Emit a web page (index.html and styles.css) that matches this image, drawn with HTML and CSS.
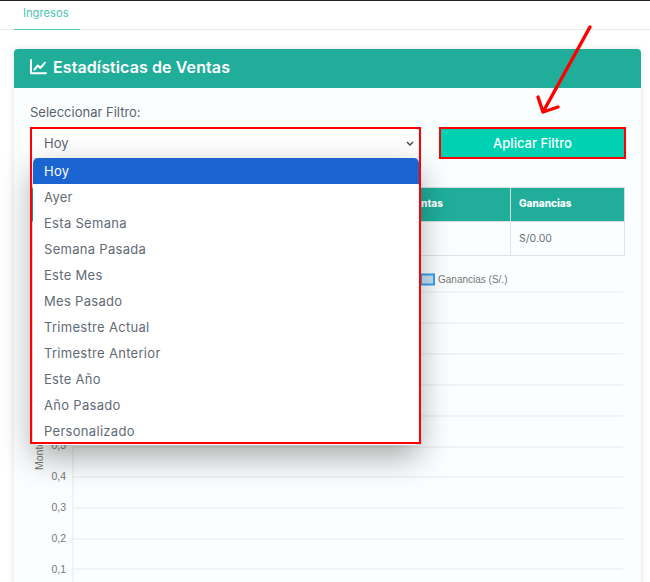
FILE: index.html
```html
<!DOCTYPE html>
<html lang="es">
<head>
<meta charset="utf-8">
<title>Estadísticas de Ventas</title>
<link rel="stylesheet" href="styles.css">
</head>
<body>
<div class="page">
  <nav class="tabs"><a class="tab">Ingresos</a></nav>
  <section class="card">
    <header class="card-head">
      <svg class="head-icon" viewBox="0 0 17 16" width="17" height="16"><path d="M1 1v13.2h15" fill="none" stroke="#fff" stroke-width="2" stroke-linecap="round" stroke-linejoin="round"/><path d="M4.5 10.5l3.3-4 2.7 2.4 4.5-5.2" fill="none" stroke="#fff" stroke-width="2" stroke-linecap="round" stroke-linejoin="round"/></svg>
      <h1>Estadísticas de Ventas</h1>
    </header>
    <div class="card-body">
      <div class="filters">
        <div class="field">
          <label class="field-label">Seleccionar Filtro:</label>
          <div class="select">
            <span>Hoy</span>
            <svg class="chev" viewBox="0 0 8 5" width="8" height="5"><path d="M1 1l3 3 3-3" fill="none" stroke="#444" stroke-width="1.4"/></svg>
          </div>
          <ul class="menu">
            <li class="on">Hoy</li>
            <li>Ayer</li>
            <li>Esta Semana</li>
            <li>Semana Pasada</li>
            <li>Este Mes</li>
            <li>Mes Pasado</li>
            <li>Trimestre Actual</li>
            <li>Trimestre Anterior</li>
            <li>Este Año</li>
            <li>Año Pasado</li>
            <li>Personalizado</li>
          </ul>
          <div class="red-box"></div>
        </div>
        <button class="apply">Aplicar Filtro</button>
      </div>
      <table class="stats">
        <thead><tr><th class="c1"></th><th class="c2">Ventas</th><th class="c3">Ganancias</th></tr></thead>
        <tbody><tr><td></td><td></td><td>S/0.00</td></tr></tbody>
      </table>
      <div class="chart">
        <svg viewBox="0 0 600 320" width="600" height="320">
          <g class="grid">
            <line x1="43" y1="24" x2="593" y2="24"/><line x1="43" y1="55" x2="593" y2="55"/><line x1="43" y1="86" x2="593" y2="86"/><line x1="43" y1="117" x2="593" y2="117"/><line x1="43" y1="148" x2="593" y2="148"/><line x1="43" y1="179" x2="593" y2="179"/><line x1="43" y1="209" x2="593" y2="209"/><line x1="43" y1="240" x2="593" y2="240"/><line x1="43" y1="271" x2="593" y2="271"/><line x1="43" y1="301" x2="593" y2="301"/>
            <line x1="43" y1="24" x2="43" y2="320"/>
          </g>
          <rect class="swatch" x="391" y="6.5" width="13" height="10"/>
          <text class="legend" x="408" y="15">Ganancias (S/.)</text>
          <text class="tick" x="36" y="181" text-anchor="end">0,5</text>
          <text class="tick" x="36" y="212" text-anchor="end">0,4</text>
          <text class="tick" x="36" y="243" text-anchor="end">0,3</text>
          <text class="tick" x="36" y="274" text-anchor="end">0,2</text>
          <text class="tick" x="36" y="305" text-anchor="end">0,1</text>
          <text class="tick" transform="translate(13 202) rotate(-90)">Monto</text>
        </svg>
      </div>
    </div>
  </section>
  <svg class="arrow" viewBox="0 0 60 95" width="60" height="95"><path d="M55 3L8 88M3 73l5 15 15-5" fill="none" stroke="#f00" stroke-width="3.4" stroke-linecap="round" stroke-linejoin="round"/></svg>
</div>
</body>
</html>
```
FILE: styles.css
```css
* { box-sizing: border-box; }
html, body { margin: 0; padding: 0; height: 582px; overflow: hidden; background: #fff; }
body { font-family: "Inter", "Open Sans", sans-serif; color: #5c6570; }
.page { position: relative; height: 582px; border-top: 1px solid #222; overflow: hidden; }
.tabs { display: flex; height: 29px; padding-left: 14px; border-bottom: 1px solid #e9e9f2; }
.tab { width: 66px; height: 29px; padding: 5px 0 0 9px; font-size: 11.2px; color: #4cc6b3; border-bottom: 1px solid #4cc6b3; }
.card { margin: 19px 9px 0 14px; height: 560px; background: #fbfefe; border-radius: 4px 4px 0 0; box-shadow: 0 0 6px rgba(0,0,0,.12); }
.card-head { display: flex; align-items: center; gap: 6px; height: 39px; padding: 0 16px 4px; background: #20ae9b; border-radius: 4px 4px 0 0; }
.head-icon { flex: none; }
.card-head h1 { margin: 0; font-size: 16px; font-weight: 600; color: #fff; letter-spacing: .1px; }
.card-body { padding: 17px 16px 0; }
.filters { display: flex; gap: 19px; align-items: flex-end; }
.field { position: relative; flex: none; width: 390px; }
.field-label { display: block; height: 22px; font-size: 13px; line-height: 15px; color: #5a626b; }
.select { display: flex; align-items: center; justify-content: space-between; height: 32px; padding: 0 5px 0 13px; font-size: 13px; background: #fff; border: 1px solid #c9def0; border-radius: 4px; }
.menu { position: absolute; z-index: 2; left: 3px; top: 53px; width: 386px; margin: 0; padding: 0 0 1px; list-style: none; background: #fff; border-radius: 5px; box-shadow: 0 12px 32px rgba(0,0,0,.34); }
.menu li { height: 26px; padding: 0 11px; font-size: 13px; letter-spacing: .3px; line-height: 27px; color: #626a75; }
.menu li.on { background: #1a65d1; color: #fff; border-radius: 5px 5px 0 0; }
.red-box { position: absolute; z-index: 3; left: 0; top: 22px; width: 391px; height: 317px; border: 2px solid #f00; pointer-events: none; }
.apply { flex: none; width: 187px; height: 32px; font: 500 13px "Inter", sans-serif; color: #fff; background: #00d1b2; border: 2.5px solid #f00; }
.stats { width: 594px; margin: 28px 0 0 1px; border-collapse: collapse; table-layout: fixed; font-size: 10.5px; }
.stats th { height: 34px; padding: 0 8px 3px; font-size: 10px; font-weight: 800; text-align: left; color: #fff; background: #20ae9b; border: 1px solid #d5dedd; }
.stats td { height: 34px; padding: 0 8px 1px; color: #69707a; border: 1px solid #dfe5e5; }
.c1 { width: 368px; } .c3 { width: 114px; }
.chart { margin: 12px 0 0 0; }
.chart svg { display: block; }
.grid line { stroke: #e6e9e9; stroke-width: 1; }
.swatch { fill: #c8e0f4; stroke: #38a0f0; stroke-width: 2; }
.legend { font: 10px "Liberation Sans", sans-serif; fill: #777; }
.tick { font: 10.5px "Liberation Sans", sans-serif; fill: #777; }
.arrow { position: absolute; left: 535px; top: 23px; }
```
